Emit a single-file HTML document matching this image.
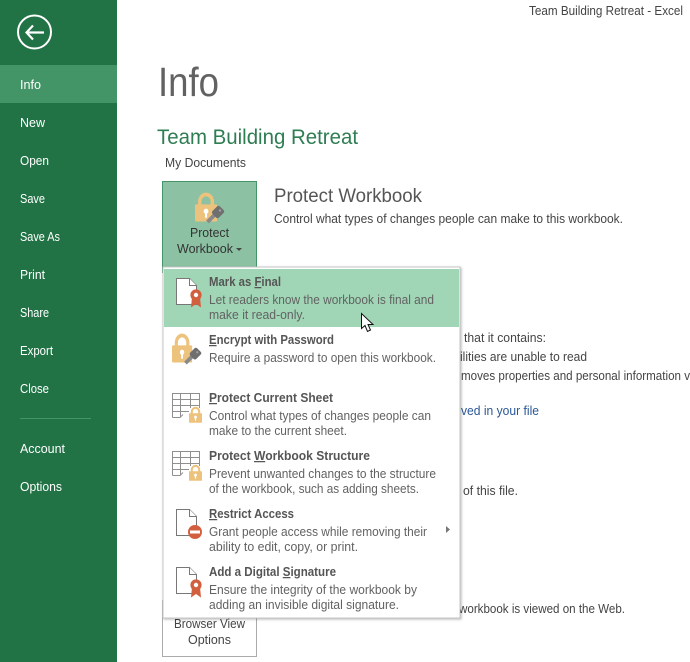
<!DOCTYPE html>
<html><head><meta charset="utf-8"><title>Team Building Retreat - Excel</title>
<style>
html,body{margin:0;padding:0;background:#fff;width:690px;height:662px;overflow:hidden}
svg{display:block;position:absolute;left:0;top:0}
text{font-family:"Liberation Sans",sans-serif;font-size:12.5px;fill:#444;white-space:pre}
.n text{fill:#fff;font-size:12.5px}
.h{font-weight:bold;fill:#555}
.d{fill:#626262}
.u{text-decoration:underline}
</style></head><body>
<svg width="690" height="662" viewBox="0 0 690 662">
<defs>
<filter id="sh" x="-5%" y="-5%" width="110%" height="110%"><feDropShadow dx="1" dy="1" stdDeviation="1.2" flood-color="#000" flood-opacity=".28"/></filter>
<g id="lock"><path d="M2.800 6.500V4.500a3.700 3.700 0 0 1 7.400 0V6.500" fill="none" stroke="#edc27c" stroke-width="2"/><rect x="0" y="6" width="13" height="9" rx=".6" fill="#edc27c"/><circle cx="6.500" cy="9.600" r="1.400" fill="#fff"/><rect x="5.900" y="10" width="1.200" height="3" fill="#fff"/></g>
<g id="doc"><path d="M.5.5H13.500L20.500 7.500V26.500H.5Z" fill="#fff" stroke="#777"/><path d="M13.500.5V7.500H20.500" fill="#fff" stroke="#777"/></g>
<g id="rib"><path d="M-4 7 -5 17.500 0 14 5 17.500 4 7Z" fill="#d2603e"/><circle cx="0" cy="5" r="5.600" fill="#d2603e"/><circle cx="0" cy="5" r="2.200" fill="#fff"/></g>
<g id="sheet" fill="none" stroke="#8f8f8f"><path d="M.5 24.500V.5H27.500V15M.5 6.500H27.500M.5 12.500H27.500M.5 18.500H17M8.500.5V24.500M18.500.5V15M.5 24.500H8L11 21.500"/></g>
<g id="key"><path d="M1.500 17 9 9.500" stroke="#8a8a8a" stroke-width="4" fill="none"/><path d="M6.500 6 11 1.500Q12.500 0 14 1.500L17.500 5Q19 6.500 17.500 8L13 12.500Q11.500 14 10 12.500L6.500 9Q5.500 7 6.500 6Z" fill="#6f6f6f"/><circle cx="14" cy="5.500" r="1.200" fill="#a0a0a0"/></g>
</defs>

<rect width="690" height="662" fill="#fff"/>
<rect width="117" height="662" fill="#217346"/>
<rect y="65" width="117" height="38" fill="#439467"/>
<circle cx="34.500" cy="32" r="16.500" fill="none" stroke="#fff" stroke-width="2"/>
<path d="M44 32.500H27M33 25.500 26.500 32.500 33 39.500" fill="none" stroke="#fff" stroke-width="2.200"/>
<rect x="20" y="418" width="71" height="1" fill="#439467"/>
<g class="n">
<text x="20" y="89" textLength="21" lengthAdjust="spacingAndGlyphs">Info</text>
<text x="20" y="127" textLength="25" lengthAdjust="spacingAndGlyphs">New</text>
<text x="20" y="165" textLength="29" lengthAdjust="spacingAndGlyphs">Open</text>
<text x="20" y="203" textLength="25" lengthAdjust="spacingAndGlyphs">Save</text>
<text x="20" y="241" textLength="40" lengthAdjust="spacingAndGlyphs">Save As</text>
<text x="20" y="279" textLength="25" lengthAdjust="spacingAndGlyphs">Print</text>
<text x="20" y="317" textLength="29" lengthAdjust="spacingAndGlyphs">Share</text>
<text x="20" y="355" textLength="33" lengthAdjust="spacingAndGlyphs">Export</text>
<text x="20" y="393" textLength="29" lengthAdjust="spacingAndGlyphs">Close</text>
<text x="20" y="453" textLength="45" lengthAdjust="spacingAndGlyphs">Account</text>
<text x="20" y="491" textLength="42" lengthAdjust="spacingAndGlyphs">Options</text>
</g>

<text x="529" y="15" textLength="154" lengthAdjust="spacingAndGlyphs">Team Building Retreat - Excel</text>
<text x="158" y="96" textLength="61" lengthAdjust="spacingAndGlyphs" style="font-size:41px;fill:#626262">Info</text>
<text x="157" y="144" textLength="201" lengthAdjust="spacingAndGlyphs" style="font-size:21px;fill:#2f7d52">Team Building Retreat</text>
<text x="165" y="167" textLength="81" lengthAdjust="spacingAndGlyphs">My Documents</text>

<rect x="162.500" y="181.500" width="94" height="91" fill="#8cc2a3" stroke="#439467"/>
<use href="#lock" transform="translate(195 193) scale(1.700 1.900)"/>
<use href="#key" transform="translate(206 205)"/>
<text x="190" y="237" textLength="39" lengthAdjust="spacingAndGlyphs" style="fill:#333">Protect</text>
<text x="177" y="253" textLength="56" lengthAdjust="spacingAndGlyphs" style="fill:#333">Workbook</text>
<path d="M236 248H242L239 251Z" fill="#444"/>

<text x="274" y="202" textLength="148" lengthAdjust="spacingAndGlyphs" style="font-size:19px;fill:#555">Protect Workbook</text>
<text x="274" y="223" textLength="349" lengthAdjust="spacingAndGlyphs">Control what types of changes people can make to this workbook.</text>

<text x="464" y="342" textLength="82" lengthAdjust="spacingAndGlyphs">that it contains:</text>
<text x="460" y="361" textLength="127" lengthAdjust="spacingAndGlyphs">ilities are unable to read</text>
<text x="461" y="380" textLength="229" lengthAdjust="spacingAndGlyphs">moves properties and personal information v</text>
<text x="461" y="415" textLength="78" lengthAdjust="spacingAndGlyphs" style="fill:#2b5797">ved in your file</text>
<text x="463" y="495" textLength="55" lengthAdjust="spacingAndGlyphs">of this file.</text>
<text x="459" y="613" textLength="166" lengthAdjust="spacingAndGlyphs">workbook is viewed on the Web.</text>

<rect x="162.500" y="600.500" width="94" height="56" fill="#fff" stroke="#ababab"/>
<text x="174" y="628" textLength="71" lengthAdjust="spacingAndGlyphs">Browser View</text>
<text x="188" y="644" textLength="43" lengthAdjust="spacingAndGlyphs">Options</text>

<rect x="163" y="267" width="297" height="351" fill="#fff" stroke="#c6c6c6" filter="url(#sh)"/>
<rect x="164" y="269" width="295" height="58" fill="#a0d6b6"/>

<use href="#doc" transform="translate(176 278)"/>
<use href="#rib" transform="translate(196 290)"/>
<text x="209" y="286" textLength="72" lengthAdjust="spacingAndGlyphs" class="h">Mark as <tspan class="u">F</tspan>inal</text>
<text x="209" y="304" textLength="225" lengthAdjust="spacingAndGlyphs" class="d">Let readers know the workbook is final and</text>
<text x="209" y="319" textLength="96" lengthAdjust="spacingAndGlyphs" class="d">make it read-only.</text>

<use href="#lock" transform="translate(172 334) scale(1.550 1.900)"/>
<use href="#key" transform="translate(184 347) scale(.95)"/>
<text x="209" y="344" textLength="125" lengthAdjust="spacingAndGlyphs" class="h"><tspan class="u">E</tspan>ncrypt with Password</text>
<text x="209" y="362" textLength="227" lengthAdjust="spacingAndGlyphs" class="d">Require a password to open this workbook.</text>

<use href="#sheet" transform="translate(172 393)"/>
<use href="#lock" transform="translate(189 407) scale(1 1.050)"/>
<text x="209" y="402" textLength="124" lengthAdjust="spacingAndGlyphs" class="h"><tspan class="u">P</tspan>rotect Current Sheet</text>
<text x="209" y="420" textLength="222" lengthAdjust="spacingAndGlyphs" class="d">Control what types of changes people can</text>
<text x="209" y="435" textLength="138" lengthAdjust="spacingAndGlyphs" class="d">make to the current sheet.</text>

<use href="#sheet" transform="translate(172 451)"/>
<use href="#lock" transform="translate(189 465) scale(1 1.050)"/>
<text x="209" y="460" textLength="161" lengthAdjust="spacingAndGlyphs" class="h">Protect <tspan class="u">W</tspan>orkbook Structure</text>
<text x="209" y="478" textLength="227" lengthAdjust="spacingAndGlyphs" class="d">Prevent unwanted changes to the structure</text>
<text x="209" y="493" textLength="210" lengthAdjust="spacingAndGlyphs" class="d">of the workbook, such as adding sheets.</text>

<use href="#doc" transform="translate(176 509)"/>
<circle cx="195" cy="532" r="7" fill="#d2603e"/><rect x="190" y="530.500" width="10" height="3" fill="#fff"/>
<text x="209" y="518" textLength="85" lengthAdjust="spacingAndGlyphs" class="h"><tspan class="u">R</tspan>estrict Access</text>
<text x="209" y="536" textLength="218" lengthAdjust="spacingAndGlyphs" class="d">Grant people access while removing their</text>
<text x="209" y="551" textLength="149" lengthAdjust="spacingAndGlyphs" class="d">ability to edit, copy, or print.</text>
<path d="M446 526 450 529.500 446 533Z" fill="#777"/>

<use href="#doc" transform="translate(176 567)"/>
<use href="#rib" transform="translate(196 580)"/>
<text x="209" y="576" textLength="127" lengthAdjust="spacingAndGlyphs" class="h">Add a Digital <tspan class="u">S</tspan>ignature</text>
<text x="209" y="594" textLength="208" lengthAdjust="spacingAndGlyphs" class="d">Ensure the integrity of the workbook by</text>
<text x="209" y="609" textLength="190" lengthAdjust="spacingAndGlyphs" class="d">adding an invisible digital signature.</text>

<path d="M361.500 313.500V328.500L365 325.500 367.500 331.500 370.500 330 368 324.500H373Z" fill="#fff" stroke="#111" stroke-width="1"/>
</svg>
</body></html>
